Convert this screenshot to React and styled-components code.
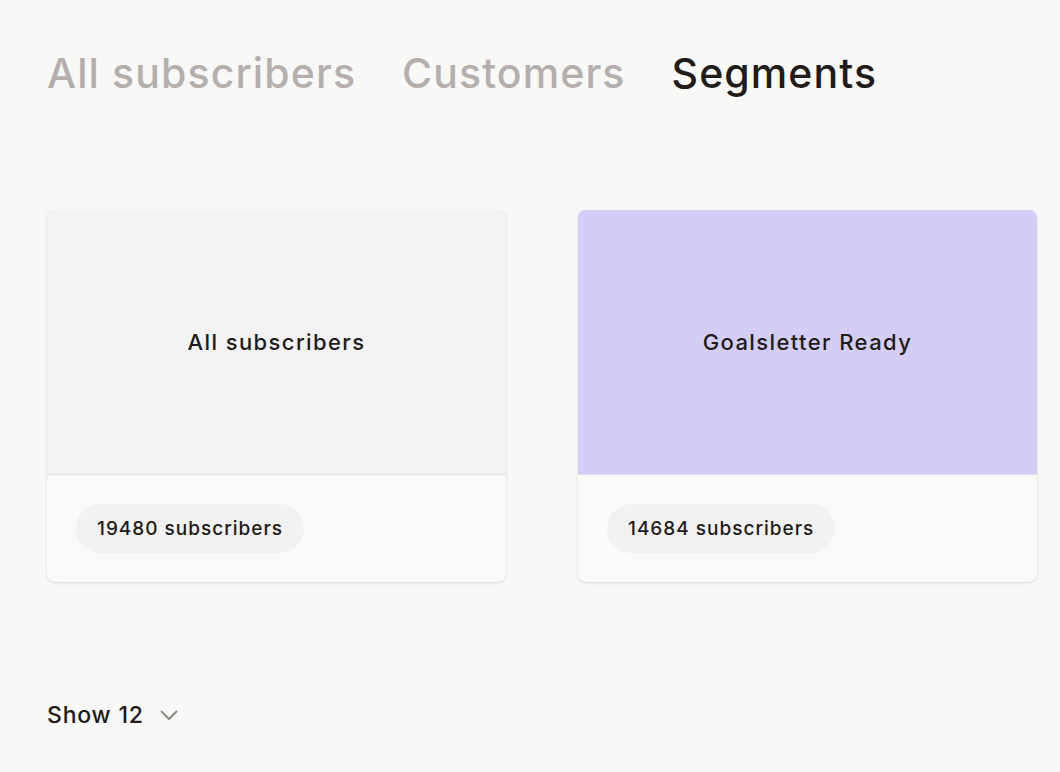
import styled, { createGlobalStyle } from "styled-components"

const GLOBAL = createGlobalStyle`
    body {
        margin: 0;
        background-color: #f8f8f7;
        font-family: Inter, "Noto Sans", sans-serif;
        color: #211b19;
    }
`

const PAGE = styled.main`
    padding: 44px 0 0 47px;
    width: 1060px;
    height: 772px;
    box-sizing: border-box;
    overflow: hidden;
`

const TABS = styled.nav`
    display: flex;
    gap: 46px;
    align-items: baseline;
`

const TAB = styled.button`
    border: none;
    background: none;
    padding: 0;
    font-family: inherit;
    font-size: 41px;
    font-weight: 500;
    letter-spacing: 1.1px;
    line-height: 58px;
    color: ${props => props.active ? "#211b19" : "#b4afac"};
    cursor: pointer;
`

const GRID = styled.section`
    display: grid;
    grid-template-columns: 459px 459px;
    gap: 72px;
    margin-top: 108px;
`

const CARD = styled.article`
    display: flex;
    flex-direction: column;
    border-radius: 8px;
    overflow: hidden;
    background-color: #f9f9f8;
    box-shadow: 0 1px 3px rgba(0, 0, 0, 0.12), 0 0 1px rgba(0, 0, 0, 0.06);
`

const COVER = styled.div`
    height: 264px;
    display: flex;
    align-items: center;
    justify-content: center;
    background-color: ${props => props.color};
    border-bottom: 1px solid #e2e1e0;
    font-size: 22px;
    font-weight: 500;
    letter-spacing: 1.4px;
`

const FOOTER = styled.div`
    height: 107px;
    display: flex;
    align-items: center;
    padding: 0 29px;
`

const PILL = styled.span`
    display: inline-flex;
    align-items: center;
    height: 49px;
    padding: 0 21px;
    border-radius: 25px;
    background-color: #f1f1f1;
    font-size: 19px;
    font-weight: 500;
    letter-spacing: 1px;
`

const SHOW = styled.button`
    display: flex;
    align-items: center;
    gap: 15px;
    margin-top: 119px;
    border: none;
    background: none;
    padding: 0;
    font-family: inherit;
    font-size: 23px;
    font-weight: 500;
    letter-spacing: 0.8px;
    color: #211b19;
    cursor: pointer;
`

const segments = [
    { name: "All subscribers", count: 19480, color: "#f2f2f2" },
    { name: "Goalsletter Ready", count: 14684, color: "#d4cdf5" },
]

function App () {
    return (
        <PAGE>
            <GLOBAL />
            <TABS>
                <TAB>All subscribers</TAB>
                <TAB>Customers</TAB>
                <TAB active>Segments</TAB>
            </TABS>
            <GRID>
                { segments.map(s => (
                    <CARD key={ s.name }>
                        <COVER color={ s.color }>{ s.name }</COVER>
                        <FOOTER>
                            <PILL>{ s.count } subscribers</PILL>
                        </FOOTER>
                    </CARD>
                )) }
            </GRID>
            <SHOW>
                Show 12
                <svg width="20" height="12" viewBox="0 0 20 12" fill="none">
                    <path d="M2 2l8 8 8-8" stroke="#8f8a88" strokeWidth="2" />
                </svg>
            </SHOW>
        </PAGE>
    )
}

export default App
